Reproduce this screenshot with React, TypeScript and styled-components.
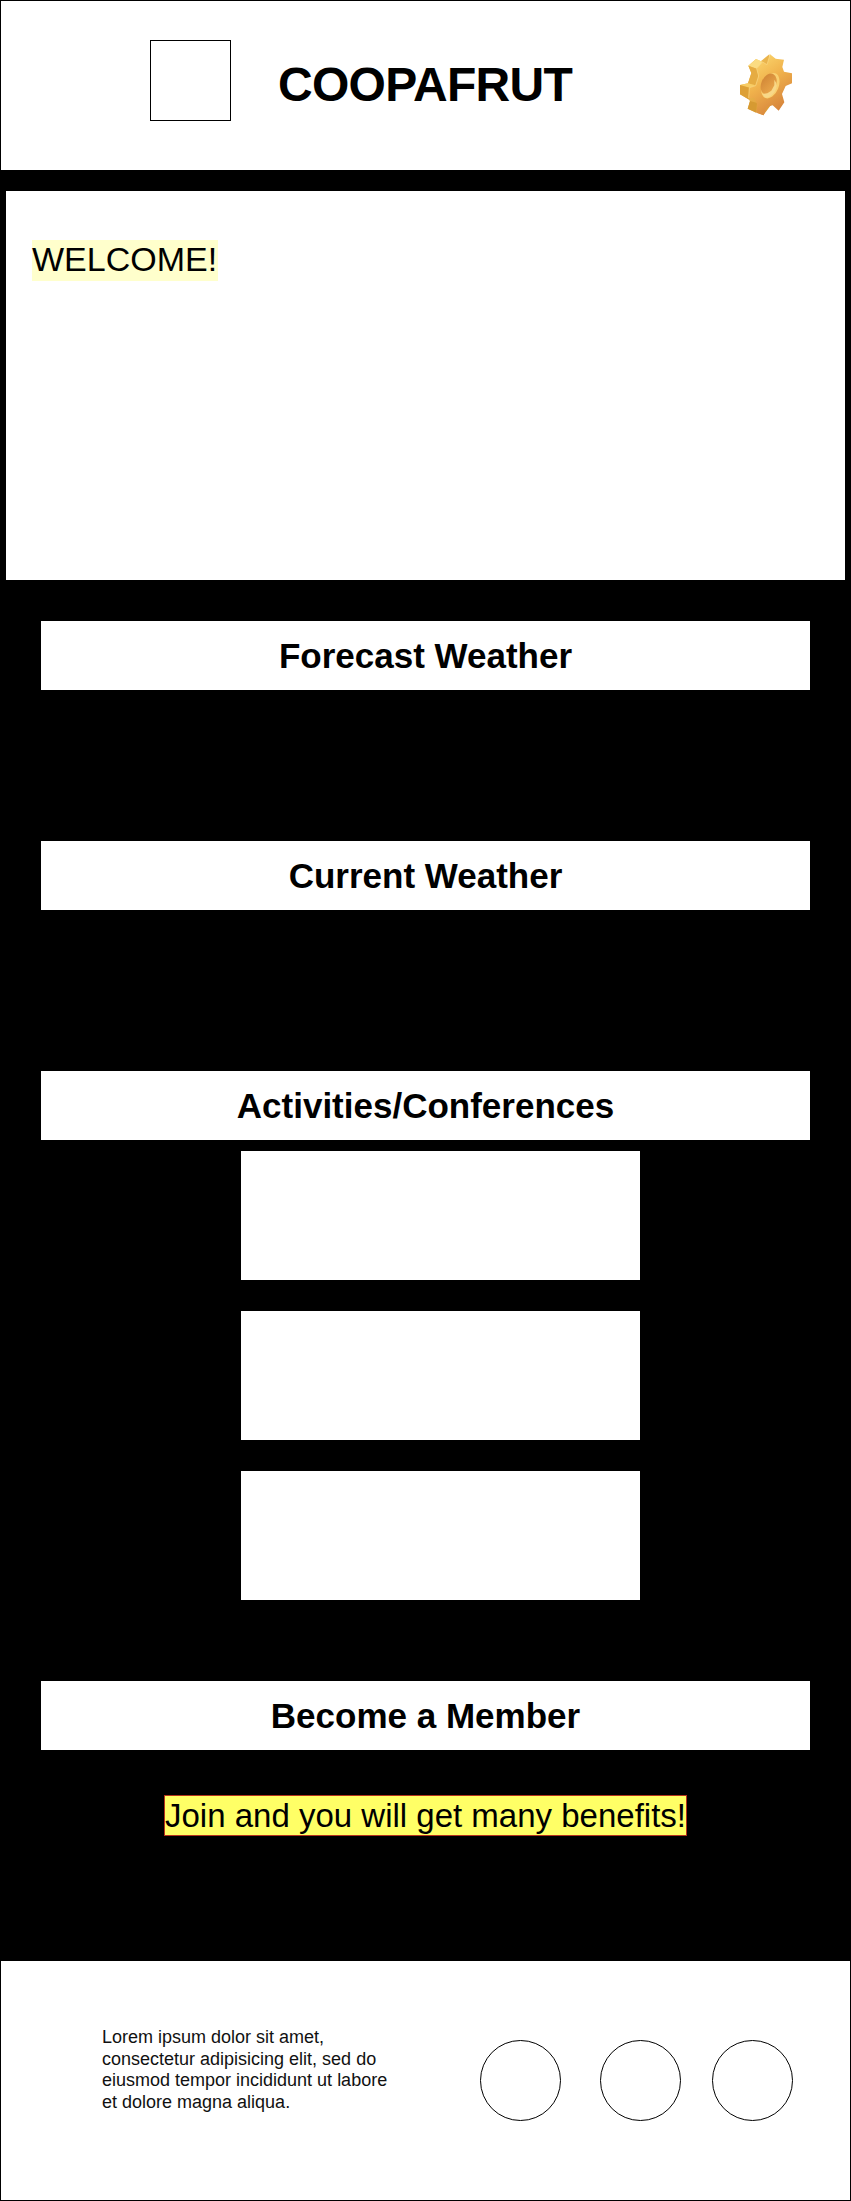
import React from "react";
import styled, { createGlobalStyle } from "styled-components";

const GlobalStyle = createGlobalStyle`
  * { box-sizing: border-box; }
  body { margin: 0; background: #000; }
`;

const Page = styled.div`
  width: 851px;
  height: 2201px;
  display: flex;
  flex-direction: column;
  background: #000;
  color: #000;
  font-family: "Liberation Sans", Arial, Helvetica, sans-serif;
  padding: 1px;
`;

const Header = styled.header`
  height: 169px;
  flex: none;
  display: flex;
  align-items: flex-start;
  background: #fff;
  padding: 39px 0 0 149px;
`;

const Logo = styled.div`
  width: 81px;
  height: 81px;
  border: 1px solid #000;
`;

const Title = styled.h1`
  margin: 18px 0 0 47px;
  width: 296px;
  font-size: 48px;
  line-height: 54px;
  font-weight: 700;
  letter-spacing: -0.7px;
  white-space: nowrap;
`;

const GearIcon = styled.svg`
  width: 70px;
  height: 80px;
  margin: 5px 0 0 156px;
`;

const Hero = styled.section`
  height: 389px;
  flex: none;
  margin: 21px 5px 0;
  padding: 49px 26px;
  background: #fff;
`;

const Welcome = styled.p`
  margin: 0;
  width: 186px;
  height: 41px;
  background: #ffffcc;
  font-size: 34px;
  line-height: 39px;
  white-space: nowrap;
`;

const Section = styled.section<{ $height: number; $top?: number }>`
  height: ${({ $height }) => $height}px;
  margin-top: ${({ $top = 0 }) => $top}px;
  flex: none;
  display: flex;
  flex-direction: column;
  align-items: center;
`;

const SectionTitle = styled.h2`
  margin: 0;
  width: 769px;
  height: 69px;
  flex: none;
  background: #fff;
  font-size: 35px;
  line-height: 69px;
  font-weight: 700;
  text-align: center;
`;

const Cards = styled.div`
  display: flex;
  flex-direction: column;
  gap: 31px;
  margin: 11px 0 0 30px;
`;

const Card = styled.div`
  width: 399px;
  height: 129px;
  background: #fff;
`;

const Benefits = styled.p`
  margin: 45px 0 0;
  width: 523px;
  height: 41px;
  border: 1px solid #b5331c;
  background: #ffff66;
  font-size: 33px;
  line-height: 39px;
  text-align: center;
  white-space: nowrap;
`;

const Footer = styled.footer`
  flex: 1;
  display: flex;
  align-items: flex-start;
  background: #fff;
`;

const FooterText = styled.p`
  margin: 66px 0 0 101px;
  width: 300px;
  color: #111;
  font-size: 18px;
  line-height: 21.6px;
`;

const Circles = styled.div`
  display: flex;
  margin: 79px 0 0 78px;
`;

const Circle = styled.div<{ $gap?: number }>`
  width: 81px;
  height: 81px;
  margin-left: ${({ $gap = 0 }) => $gap}px;
  border: 1px solid #000;
  border-radius: 50%;
`;

const Gear = () => (
  <GearIcon viewBox="0 0 210 240" aria-hidden="true">
    <defs>
      <linearGradient id="face" x1="0.3" y1="0" x2="0.8" y2="1">
        <stop offset="0" stopColor="#fbd56c" />
        <stop offset="0.4" stopColor="#f0b24c" />
        <stop offset="1" stopColor="#d17a38" />
      </linearGradient>
      <linearGradient id="side" x1="0" y1="0" x2="1" y2="1">
        <stop offset="0" stopColor="#f8cf63" />
        <stop offset="1" stopColor="#d8912f" />
      </linearGradient>
      <linearGradient id="hole" x1="0" y1="0" x2="1" y2="0.6">
        <stop offset="0" stopColor="#cf8334" />
        <stop offset="1" stopColor="#e9a64a" />
      </linearGradient>
    </defs>
    <path fill="url(#side)" d="M118 28L92 49L78 42L55 62L64 84L54 115L30 120V148L54 162L60 168L53 191L100 211L130 170L120 60Z" />
    <path fill="#fbdc82" d="M78 42L98 50L80 71L55 62Z" />
    <path fill="#e6ac42" d="M55 62L80 71L85 92L76 121L54 115L64 84Z" />
    <path fill="#f8cd65" d="M30 120L54 115L76 121L58 128Z" />
    <path fill="#dda036" d="M30 120L58 128V158L54 162L30 148Z" />
    <path fill="#d69a32" d="M60 168L81 174L78 203L53 191Z" />
    <path fill="url(#face)" d="M120 28L137 41L162 44L157 66L162 80L186 85V115L167 123L156 147L163 172L146 197L128 181L110 186L101 211L79 203L82 179L73 158L56 159L58 128L77 122L86 93L80 71L98 51L111 59Z" />
    <path fill="none" stroke="#fbd985" strokeWidth="2" d="M56 159L58 128L77 122L86 93L80 71L98 51L111 59L120 29" />
    <ellipse cx="121" cy="122" rx="25" ry="40" transform="rotate(22 121 122)" fill="#f9d070" />
    <ellipse cx="116" cy="117" rx="22" ry="33" transform="rotate(24 116 117)" fill="url(#hole)" />
    <path fill="#f8d888" d="M97 147L112 145L124 137L133 121L133 104Q147 122 133 142Q118 162 104 157Z" />
  </GearIcon>
);

export default function App() {
  return (
    <>
      <GlobalStyle />
      <Page>
        <Header>
          <Logo />
          <Title>COOPAFRUT</Title>
          <Gear />
        </Header>
        <Hero>
          <Welcome>WELCOME!</Welcome>
        </Hero>
        <Section $top={41} $height={220}>
          <SectionTitle>Forecast Weather</SectionTitle>
        </Section>
        <Section $height={230}>
          <SectionTitle>Current Weather</SectionTitle>
        </Section>
        <Section $height={610}>
          <SectionTitle>Activities/Conferences</SectionTitle>
          <Cards>
            <Card />
            <Card />
            <Card />
          </Cards>
        </Section>
        <Section $height={280}>
          <SectionTitle>Become a Member</SectionTitle>
          <Benefits>Join and you will get many benefits!</Benefits>
        </Section>
        <Footer>
          <FooterText>
            Lorem ipsum dolor sit amet,
            <br />
            consectetur adipisicing elit, sed do
            <br />
            eiusmod tempor incididunt ut labore
            <br />
            et dolore magna aliqua.
          </FooterText>
          <Circles>
            <Circle />
            <Circle $gap={39} />
            <Circle $gap={31} />
          </Circles>
        </Footer>
      </Page>
    </>
  );
}
